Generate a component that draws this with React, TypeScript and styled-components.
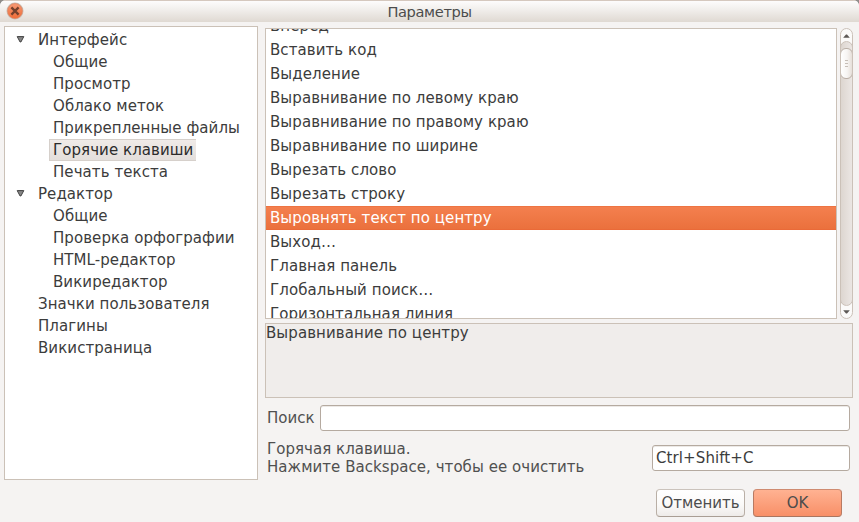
import React from "react";
import styled, { createGlobalStyle, css } from "styled-components";

const GlobalStyle = createGlobalStyle`
  * { box-sizing: border-box; }
  body { margin: 0; background: #8f8c89; }
`;

const Window = styled.div`
  width: 859px;
  height: 522px;
  display: flex;
  flex-direction: column;
  overflow: hidden;
  background: #f5f3f2;
  border-radius: 6px 6px 0 0;
  color: #3c3c3c;
  font: 15px/18px "DejaVu Sans", sans-serif;
  white-space: nowrap;
`;

const TitleBar = styled.header`
  height: 22px;
  flex: none;
  display: grid;
  grid-template-columns: 30px 1fr 30px;
  align-items: center;
  border-top: 1px solid #d5c8be;
  background: linear-gradient(#fdfcfc, #f0edea 45%, #dfd9d2);
`;

const CloseButton = styled.button`
  width: 18px;
  height: 18px;
  margin: 0 0 1px 6px;
  padding: 0;
  border: 0;
  background: none;
  display: block;
  svg { display: block; }
`;

const Title = styled.h1`
  margin: 0;
  color: #4c4c4c;
  font: 14.6px/20px "DejaVu Sans", sans-serif;
  letter-spacing: -0.35px;
  text-align: center;
`;

const Content = styled.main`
  flex: 1;
  min-height: 0;
  display: grid;
  grid-template-columns: 254px 588px;
  column-gap: 7px;
  padding: 4px 6px 0 4px;
`;

const Tree = styled.nav`
  height: 454px;
  padding: 2px 0 0 4px;
  border: 1px solid #cbc1b7;
  background: #fff;
`;

const TreeRow = styled.div<{ $level: number }>`
  height: 22px;
  display: flex;
  align-items: center;
  padding-left: ${(p) => (p.$level ? 40 : 0)}px;
`;

const Expander = styled.span`
  width: 25px;
  display: flex;
  padding-left: 7px;
  margin-top: -2px;
  svg { display: block; }
`;

const TreeLabel = styled.span<{ $selected?: boolean }>`
  height: 22px;
  padding: 0 3px 0 4px;
  line-height: 22px;
  letter-spacing: 0.07px;
  ${(p) =>
    p.$selected &&
    css`
      color: #2c2c2c;
      background: linear-gradient(#f0ebe8, #e3dedb);
      box-shadow: inset 1px 1px #d6d0cb, inset 0 -1px #d6d0cb;
    `}
`;

const Panel = styled.section`
  display: flex;
  flex-direction: column;
  padding-top: 2px;
`;

const ListArea = styled.div`
  display: flex;
  gap: 3px;
  height: 291px;
`;

const List = styled.ul`
  width: 572px;
  margin: 0;
  padding: 0;
  list-style: none;
  overflow: hidden;
  border: 1px solid #cbc1b7;
  background: #fff;
  letter-spacing: 0.075px;
`;

const ListItem = styled.li<{ $selected?: boolean }>`
  height: 24px;
  padding-left: 4px;
  line-height: 24px;
  &:first-child { margin-top: -15px; }
  ${(p) =>
    p.$selected &&
    css`
      color: #fff;
      background: linear-gradient(#f4804f, #ea703c);
      box-shadow: inset 0 1px #ee7442, inset 0 -1px #ea6a38;
    `}
`;

const ScrollTrack = styled.div`
  width: 13px;
  height: 291px;
  display: flex;
  flex-direction: column;
  overflow: hidden;
  border: 1px solid #cbc1b8;
  border-radius: 7px;
  background: #fbfaf9;
`;

const ScrollStep = styled.div<{ $down?: boolean }>`
  height: 12px;
  flex: none;
  display: flex;
  justify-content: center;
  padding-top: ${(p) => (p.$down ? 4 : 5)}px;
  svg { display: block; }
`;

const Trough = styled.div`
  flex: 1;
  margin: 0 -1px;
  padding-top: 6px;
  border: 1px solid #cbc1b8;
  border-radius: 7px;
  background: linear-gradient(90deg, #ddd6d0, #ebe6e3);
`;

const Thumb = styled.div`
  height: 31px;
  margin: 0 -1px;
  display: flex;
  flex-direction: column;
  align-items: center;
  justify-content: center;
  gap: 2px;
  border: 1px solid #b9aea5;
  border-radius: 6px;
  background: linear-gradient(90deg, #fff, #f7f5f3 55%, #e6dfd9);
`;

const Grip = styled.i`
  width: 3px;
  height: 1px;
  background: #c6beb7;
`;

const Description = styled.div`
  height: 75px;
  margin-top: 4px;
  border: 1px solid #cbc1b7;
  background: #f0edeb;
  letter-spacing: 0.08px;
`;

const SearchRow = styled.label`
  display: flex;
  align-items: center;
  justify-content: space-between;
  height: 26px;
  margin: 7px 3px 0 2px;
  color: #505050;
`;

const Field = styled.input<{ $width: number }>`
  width: ${(p) => p.$width}px;
  height: 26px;
  padding: 0 3px;
  border: 1px solid #b5aaa0;
  border-radius: 3px;
  outline: 0;
  background: #fff;
  box-shadow: inset 0 1px #ece9e6;
  color: #3c3c3c;
  font: 15px/18px "DejaVu Sans", sans-serif;
  letter-spacing: 0.1px;
`;

const HotkeyRow = styled.label`
  display: flex;
  justify-content: space-between;
  height: 36px;
  margin: 9px 3px 0 2px;
  color: #505050;
`;

const HotkeyHint = styled.span`
  line-height: 18px;
  letter-spacing: 0.05px;
`;

const HotkeyField = styled(Field)`
  margin-top: 5px;
`;

const Actions = styled.footer`
  display: flex;
  justify-content: flex-end;
  gap: 8px;
  margin: 13px 11px 0 0;
`;

const Button = styled.button<{ $primary?: boolean }>`
  width: 89px;
  height: 28px;
  padding: 0 0 1px;
  border: 1px solid;
  border-color: ${(p) => (p.$primary ? "#cf8b70 #b87a62 #a97560" : "#cbc3bc #b9afa6 #a99e94")};
  border-radius: 4px;
  background: ${(p) =>
    p.$primary ? "linear-gradient(#ffb292, #f88f67)" : "linear-gradient(#fff, #fbfaf9 55%, #eeebe9)"};
  color: #4c4c4c;
  font: 15px/18px "DejaVu Sans", sans-serif;
  white-space: nowrap;
`;

const CloseIcon = () => (
  <svg width="18" height="18" viewBox="0 0 18 18">
    <defs>
      <linearGradient id="close-fill" x2="0" y2="1">
        <stop stopColor="#f69a76" />
        <stop offset="1" stopColor="#ee6c37" />
      </linearGradient>
    </defs>
    <circle cx="9" cy="9" r="8.5" fill="#c9bbb0" />
    <circle cx="9" cy="9" r="7.4" fill="url(#close-fill)" stroke="#e77e55" strokeWidth=".6" />
    <path d="m5.4 5.4 7.2 7.2m0-7.2-7.2 7.2" stroke="#74402c" strokeWidth="2.3" />
  </svg>
);

const ExpanderIcon = () => (
  <svg width="9" height="7" viewBox="0 0 9 7">
    <path d="M1.2.6h6.6L4.9 6h-.8z" fill="#858585" stroke="#414141" />
  </svg>
);

const StepIcon = ({ down }: { down?: boolean }) => (
  <svg width="7" height="4" viewBox="0 0 7 4">
    <path d={down ? "M.2.2h6.6L4 3.5H3z" : "M.2 3.8h6.6L4 .5H3z"} fill="#5c5855" />
  </svg>
);

interface Node {
  label: string;
  level: number;
  open?: boolean;
  selected?: boolean;
}

const nodes: Node[] = [
  { label: "Интерфейс", level: 0, open: true },
  { label: "Общие", level: 1 },
  { label: "Просмотр", level: 1 },
  { label: "Облако меток", level: 1 },
  { label: "Прикрепленные файлы", level: 1 },
  { label: "Горячие клавиши", level: 1, selected: true },
  { label: "Печать текста", level: 1 },
  { label: "Редактор", level: 0, open: true },
  { label: "Общие", level: 1 },
  { label: "Проверка орфографии", level: 1 },
  { label: "HTML-редактор", level: 1 },
  { label: "Викиредактор", level: 1 },
  { label: "Значки пользователя", level: 0 },
  { label: "Плагины", level: 0 },
  { label: "Викистраница", level: 0 },
];

const commands = [
  "Вперед",
  "Вставить код",
  "Выделение",
  "Выравнивание по левому краю",
  "Выравнивание по правому краю",
  "Выравнивание по ширине",
  "Вырезать слово",
  "Вырезать строку",
  "Выровнять текст по центру",
  "Выход…",
  "Главная панель",
  "Глобальный поиск…",
  "Горизонтальная линия",
];

export default function App() {
  return (
    <>
      <GlobalStyle />
      <Window>
        <TitleBar>
          <CloseButton aria-label="Закрыть">
            <CloseIcon />
          </CloseButton>
          <Title>Параметры</Title>
        </TitleBar>
        <Content>
          <Tree>
            {nodes.map((n, i) => (
              <TreeRow key={i} $level={n.level}>
                {n.level === 0 && <Expander>{n.open && <ExpanderIcon />}</Expander>}
                <TreeLabel $selected={n.selected}>{n.label}</TreeLabel>
              </TreeRow>
            ))}
          </Tree>
          <Panel>
            <ListArea>
              <List>
                {commands.map((c) => (
                  <ListItem key={c} $selected={c === "Выровнять текст по центру"}>
                    {c}
                  </ListItem>
                ))}
              </List>
              <ScrollTrack>
                <ScrollStep>
                  <StepIcon />
                </ScrollStep>
                <Trough>
                  <Thumb>
                    <Grip />
                    <Grip />
                    <Grip />
                  </Thumb>
                </Trough>
                <ScrollStep $down>
                  <StepIcon down />
                </ScrollStep>
              </ScrollTrack>
            </ListArea>
            <Description>Выравнивание по центру</Description>
            <SearchRow>
              Поиск
              <Field $width={530} />
            </SearchRow>
            <HotkeyRow>
              <HotkeyHint>
                Горячая клавиша.
                <br />
                Нажмите Backspace, чтобы ее очистить
              </HotkeyHint>
              <HotkeyField $width={198} defaultValue="Ctrl+Shift+C" />
            </HotkeyRow>
            <Actions>
              <Button>Отменить</Button>
              <Button $primary>OK</Button>
            </Actions>
          </Panel>
        </Content>
      </Window>
    </>
  );
}
